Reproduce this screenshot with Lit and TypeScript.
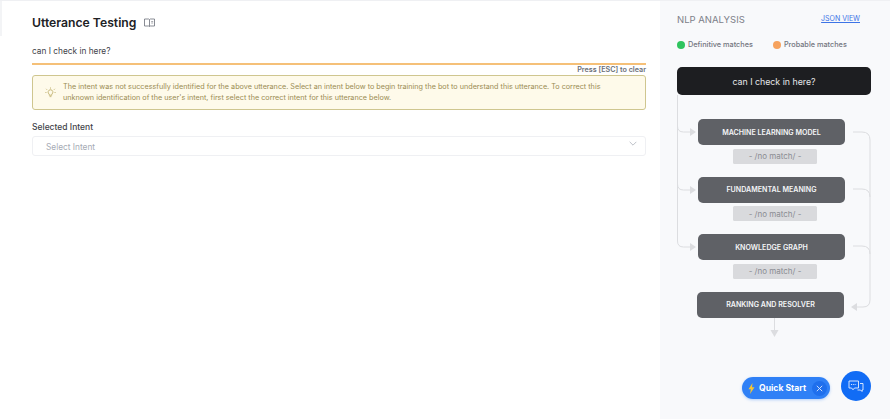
import { LitElement, html, css, svg } from "lit";
import { customElement } from "lit/decorators.js";

@customElement("app-root")
export class AppRoot extends LitElement {
  static styles = css`
    :host { display: block; width: 890px; height: 419px; overflow: hidden; background: #fff; font-family: Inter, "Noto Sans", sans-serif; position: relative; }
    * { box-sizing: border-box; }
    .page { display: flex; height: 419px; border-top: 1px solid #eff0f3; position: relative; }
    .edge { position: absolute; left: 0; top: 0; width: 2px; height: 35px; background: #f3f4f6; }
    .main { width: 660px; flex: none; padding: 0 14px 0 32px; }
    .title { display: flex; align-items: center; gap: 8px; height: 44px; padding-bottom: 2px; }
    h1 { margin: 0; font-size: 12.2px; font-weight: 600; color: #202124; line-height: 17px; }
    .book { width: 11px; height: 9px; display: block; }
    .utter { height: 20px; font-size: 8.3px; color: #3f434a; line-height: 12px; border-bottom: 2px solid #f5c078; }
    .hint { text-align: right; font-size: 7.2px; font-weight: 600; color: #6b6f78; line-height: 10px; height: 10px; }
    .alert { display: flex; align-items: center; height: 35px; border: 1px solid #cfc68f; border-radius: 3px; background: #fefaea; padding: 0 10px 0 12px; gap: 7px; color: #9a8c52; font-size: 7.23px; line-height: 10.3px; }
    .alert svg { flex: none; width: 11px; height: 11px; }
    .label { margin-top: 12px; font-size: 8.5px; font-weight: 500; color: #3f434a; line-height: 11px; }
    .select { margin-top: 3px; height: 20px; border: 1px solid #eff0f3; border-radius: 3px; display: flex; align-items: center; justify-content: space-between; padding: 0 8px 0 13px; font-size: 8.3px; color: #a6abb5; }
    .select span { margin-top: 2px; }
    .select svg { width: 8px; height: 5px; margin-top: -5px; }
    .side { flex: 1; background: #f8f9fb; padding: 0 17px; position: relative; }
    .side-head { display: flex; justify-content: space-between; padding-right: 30px; height: 40px; padding-top: 13px; }
    .side-head h2 { margin: 0; font-size: 9.5px; font-weight: 400; color: #7d8089; line-height: 11px; }
    .json { font-size: 7px; color: #3d74e6; text-decoration: underline; line-height: 9px; }
    .legend { display: flex; gap: 20px; height: 26px; font-size: 7.3px; font-weight: 500; color: #737680; align-items: flex-start; line-height: 9px; margin-top: -1px; margin-bottom: 1px; }
    .legend span { display: flex; align-items: center; gap: 3px; }
    .legend i { width: 8px; height: 8px; border-radius: 50%; display: block; }
    .flow { position: relative; width: 213px; display: flex; flex-direction: column; align-items: flex-start; }
    .query { width: 194px; height: 28px; border-radius: 5px; background: #1d1e21; color: #e4e5e8; font-size: 8.8px; display: flex; align-items: center; justify-content: center; }
    .node { width: 147px; height: 26px; margin-left: 21px; border-radius: 5px; background: #5f6166; color: #f4f5f7; font-size: 7.1px; font-weight: 600; display: flex; align-items: center; justify-content: center; }
    .first { margin-top: 24px; }
    .tag { width: 84px; height: 15px; margin: 3.5px 0 0 56px; background: #d9dadd; border-radius: 1.5px; color: #8a8c92; font-size: 8px; display: flex; align-items: center; justify-content: center; }
    .next { margin-top: 13px; }
    .last { margin-left: 20px; margin-top: 13px; }
    .lines { position: absolute; left: 0; top: 0; width: 213px; height: 280px; pointer-events: none; }
    .quick { position: absolute; left: 82px; top: 376px; width: 88px; height: 22px; border-radius: 11px; background: #2f80f6; color: #fff; font-size: 8.6px; font-weight: 700; display: flex; align-items: center; padding: 0 3px 0 6px; box-shadow: 0 1px 3px rgba(47,128,246,.35); }
    .quick .bolt { width: 7px; height: 11px; margin-right: 4px; }
    .quick .x { margin-left: auto; width: 15px; height: 15px; border-radius: 50%; background: #1f6fed; display: flex; align-items: center; justify-content: center; }
    .quick .x svg { width: 7px; height: 7px; }
    .chat { position: absolute; left: 181px; top: 370px; width: 30px; height: 30px; border-radius: 50%; background: #116cf5; display: flex; align-items: center; justify-content: center; }
    .chat svg { width: 16px; height: 13px; }
  `;

  render() {
    const c = "#dcdde0";
    return html`
      <div class="page">
        <div class="edge"></div>
        <div class="main">
          <div class="title">
            <h1>Utterance Testing</h1>
            <svg class="book" viewBox="0 0 11 9" fill="none" stroke="#6b6f78" stroke-width=".8"><path d="M.5 1h4.2l.8.6.8-.6h4.2v7H6.3l-.8.5-.8-.5H.5zM5.5 1.6V8.4"/><path d="M7.2 3.5h2M7.2 5h2" stroke-width=".6"/></svg>
          </div>
          <div class="utter">can I check in here?</div>
          <div class="hint">Press [ESC] to clear</div>
          <div class="alert">
            <svg viewBox="0 0 12 12" fill="none" stroke="#b5a356" stroke-width=".8"><path d="M6 3a2.6 2.6 0 0 0-1.4 4.8V9h2.8V7.8A2.6 2.6 0 0 0 6 3zM5 10.5h2M6 .5V1.8M1.2 2l1 1M10.8 2l-1 1M.4 6h1.2M10.4 6h1.2"/></svg>
            <div>The intent was not successfully identified for the above utterance. Select an intent below to begin training the bot to understand this utterance. To correct this<br>unknown identification of the user's intent, first select the correct intent for this utterance below.</div>
          </div>
          <div class="label">Selected Intent</div>
          <div class="select">
            <span>Select Intent</span>
            <svg viewBox="0 0 9 6" fill="none" stroke="#a6abb5" stroke-width=".9"><path d="M.5 1l4 4 4-4"/></svg>
          </div>
        </div>
        <div class="side">
          <div class="side-head">
            <h2>NLP ANALYSIS</h2>
            <span class="json">JSON VIEW</span>
          </div>
          <div class="legend">
            <span><i style="background:#2fc45e"></i>Definitive matches</span>
            <span><i style="background:#f6a25e"></i>Probable matches</span>
          </div>
          <div class="flow">
            <svg class="lines" viewBox="0 0 213 280" fill="none" stroke="${c}" stroke-width="1">
              ${svg`
                <path d="M0.5 28V59q0 6 6 6h8M0.5 59V117q0 6 6 6h8M0.5 117V174q0 6 6 6h8"/>
                <path d="M13 61l6 4-6 4zM13 119l6 4-6 4zM13 176l6 4-6 4z" fill="${c}" stroke="none"/>
                <path d="M176 65h9q8 0 8 8V233q0 7-7 7h-6M176 122h9q8 0 8 8M176 179h9q8 0 8 8"/>
                <path d="M180 236l-6 4 6 4z" fill="${c}" stroke="none"/>
                <path d="M97.5 251V264"/>
                <path d="M93.5 263l4 7 4-7z" fill="${c}" stroke="none"/>
              `}
            </svg>
            <div class="query">can I check in here?</div>
            <div class="node first">MACHINE LEARNING MODEL</div>
            <div class="tag">- /no match/ -</div>
            <div class="node next">FUNDAMENTAL MEANING</div>
            <div class="tag">- /no match/ -</div>
            <div class="node next">KNOWLEDGE GRAPH</div>
            <div class="tag">- /no match/ -</div>
            <div class="node last">RANKING AND RESOLVER</div>
          </div>
          <div class="quick">
            <svg class="bolt" viewBox="0 0 7 11"><path d="M4.5 0L.5 6.3h2.4L2 11l4.5-6.8H4z" fill="#f7c531"/></svg>
            Quick Start
            <span class="x"><svg viewBox="0 0 7 7" stroke="#dbe8ff" stroke-width=".9"><path d="M.8.8l5.4 5.4M6.2.8L.8 6.2"/></svg></span>
          </div>
          <div class="chat">
            <svg viewBox="0 0 16 13" fill="none" stroke="#e8f0ff" stroke-width=".9"><path d="M1 1h9.5v7H6.5L5 9.8 3.6 8H1z"/><path d="M3 4.5h5.5" stroke-dasharray="1 .8"/><path d="M12 3.5h3v6.5h-1v1.5L12.5 10H9.5"/></svg>
          </div>
        </div>
      </div>
    `;
  }
}
